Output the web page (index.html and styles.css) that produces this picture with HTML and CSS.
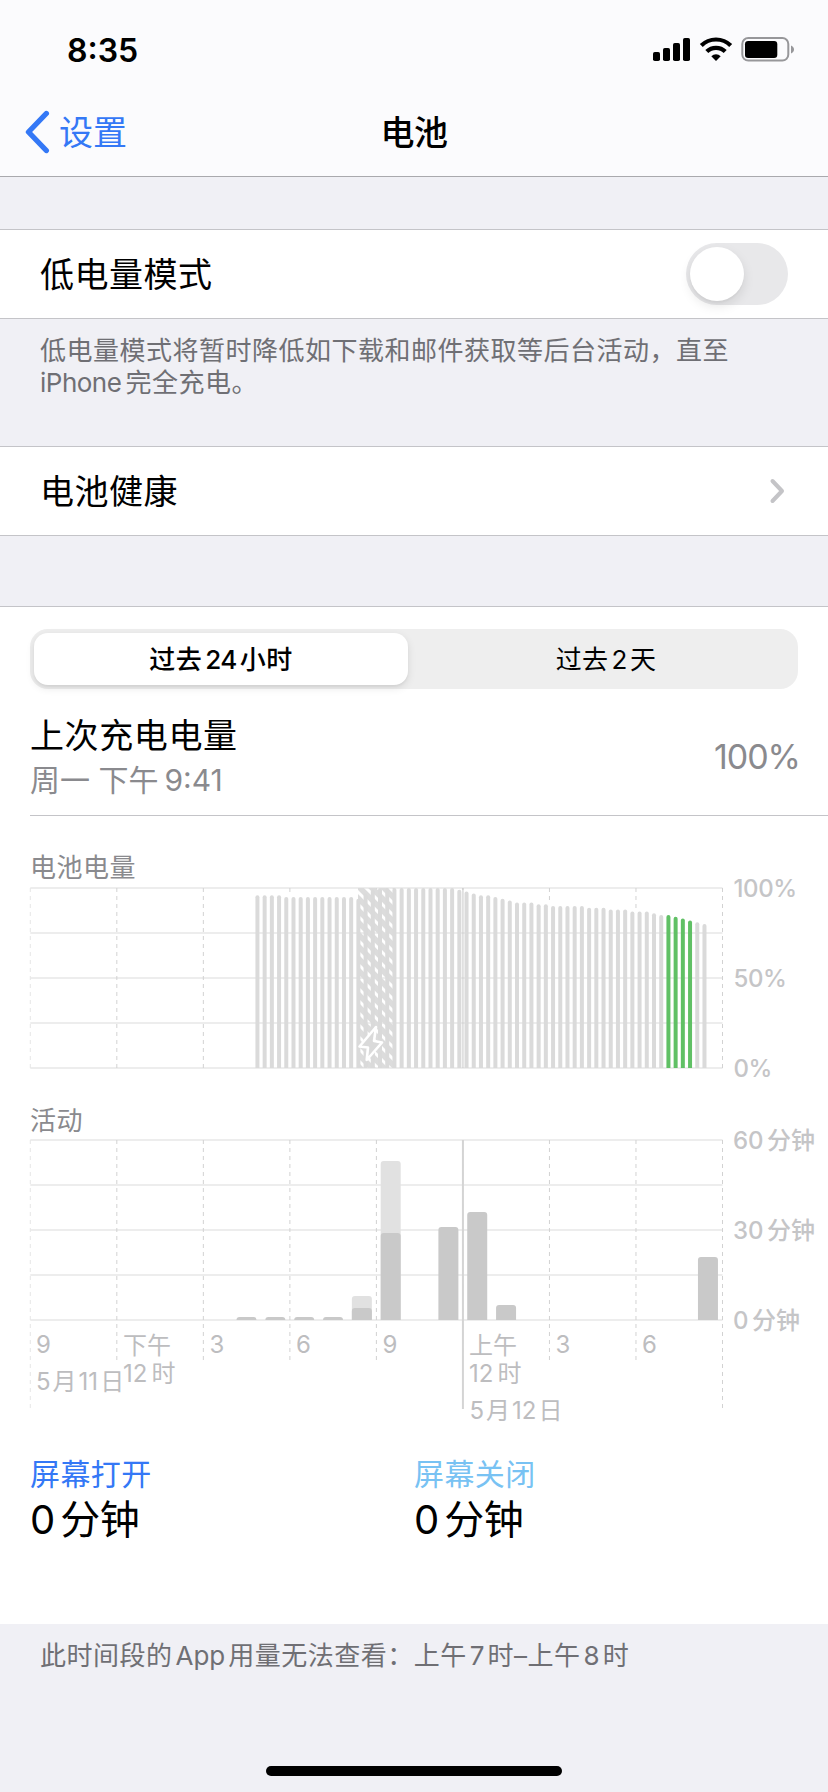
FILE: index.html
```
<!DOCTYPE html>
<html lang="zh-CN">
<head>
<meta charset="utf-8">
<title>电池</title>
<link rel="stylesheet" href="styles.css">
</head>
<body>
<main class="screen">
  <header class="top">
    <div class="status">
      <span class="time">8:35</span>
      <svg class="status-icons" width="144" height="30" viewBox="0 0 144 30">
        <rect x="1" y="16" width="7" height="9" rx="1.8"/>
        <rect x="11" y="12" width="7" height="13" rx="1.8"/>
        <rect x="21" y="7" width="7" height="18" rx="1.8"/>
        <rect x="31" y="2" width="7" height="23" rx="1.8"/>
        <g fill="none" stroke="#000" stroke-width="4.2">
          <path d="M49.3 9.6a20.8 20.8 0 0 1 29.4 0"/>
          <path d="M54.8 15.6a13 13 0 0 1 18.4 0"/>
        </g>
        <path d="M59.3 20.2a6.8 6.8 0 0 1 9.4 0L64 25z"/>
        <rect x="90.3" y="2" width="46" height="22.6" rx="6" fill="none" stroke="#97979a" stroke-width="2"/>
        <rect x="93" y="5" width="32.3" height="17" rx="3.2"/>
        <path d="M139 9.5c4 1.600 4 6.400 0 8z" fill="#97979a"/>
      </svg>
    </div>
    <nav class="nav">
      <a class="back">
        <svg width="26" height="44" viewBox="0 0 26 44"><path d="M22.300 3.500L4.500 22l17.800 18.500" fill="none" stroke="#3478f6" stroke-width="5.400" stroke-linecap="round" stroke-linejoin="round"/></svg>
        <span class="back-label">设置</span>
      </a>
      <h1 class="title">电池</h1>
    </nav>
  </header>

  <section class="row row-first">
    <span class="row-label">低电量模式</span>
    <span class="switch"><span class="knob"></span></span>
  </section>
  <p class="note note-mode">低电量模式将暂时降低如下载和邮件获取等后台活动，直至<br><span class="latin iphone">iPhone</span>完全充电。</p>

  <section class="row">
    <span class="row-label">电池健康</span>
    <svg class="chevron" width="18" height="28" viewBox="0 0 18 28"><path d="M4.500 4l9.500 10-9.500 10" fill="none" stroke="#c4c4c7" stroke-width="4" stroke-linecap="round" stroke-linejoin="round"/></svg>
  </section>

  <section class="card">
    <div class="segments">
      <span class="segment active">过去<span class="latin mid">24</span>小时</span>
      <span class="segment other">过去<span class="latin mid">2</span>天</span>
    </div>
    <div class="charge">
      <div>
        <div class="charge-title">上次充电电量</div>
        <div class="charge-time">周一 下午<span class="latin clock">9:41</span></div>
      </div>
      <span class="percent">100%</span>
    </div>

    <h2 class="chart-title level-title">电池电量</h2>
    <svg class="chart" width="828" height="219" viewBox="0 885 828 219">
      <defs>
        <pattern id="hatch" width="12" height="12" patternUnits="userSpaceOnUse">
          <path d="M-6 -6L18 18M-6 6L6 18M6 -6L18 6" stroke="#dcdcdc" stroke-width="5.500"/>
        </pattern>
      </defs>
      <g id="level-grid"></g>
      <rect x="358" y="888" width="36" height="180" fill="url(#hatch)"/>
      <g id="level-bars"></g>
      <path d="M376 1027L359.500 1046.500L368 1047.500L366.700 1060L382 1042.500L374 1041z" fill="#dadada" stroke="#fff" stroke-width="2.600" stroke-linejoin="round"/>
      <g class="axis percent-axis">
        <text x="733.500" y="897">100%</text>
        <text x="733.500" y="987">50%</text>
        <text x="733.500" y="1077">0%</text>
      </g>
    </svg>

    <h2 class="chart-title activity-title">活动</h2>
    <svg class="chart" width="828" height="303" viewBox="0 1137 828 303">
      <g id="activity-grid"></g>
      <g id="activity-bars"></g>
      <g class="axis">
        <text x="733" y="1149">60<tspan dx="3.500">分钟</tspan></text>
        <text x="733" y="1239">30<tspan dx="3.500">分钟</tspan></text>
        <text x="733" y="1329">0<tspan dx="3.500">分钟</tspan></text>
      </g>
      <g class="axis hours">
        <text x="36" y="1353">9</text>
        <text x="36" y="1389.500">5<tspan dx="2">月</tspan><tspan dx="2">11</tspan><tspan dx="2">日</tspan></text>
        <text x="123" y="1354">下午</text>
        <text x="123" y="1381.500">12<tspan dx="4">时</tspan></text>
        <text x="209.500" y="1353">3</text>
        <text x="296" y="1353">6</text>
        <text x="382.500" y="1353">9</text>
        <text x="469" y="1354">上午</text>
        <text x="469" y="1381.500">12<tspan dx="4">时</tspan></text>
        <text x="469.500" y="1418.500">5<tspan dx="2">月</tspan><tspan dx="2">12</tspan><tspan dx="2">日</tspan></text>
        <text x="555.500" y="1353">3</text>
        <text x="642" y="1353">6</text>
      </g>
    </svg>

    <div class="totals">
      <div>
        <div class="total-label on">屏幕打开</div>
        <div class="total-value"><span class="latin zero">0</span>分钟</div>
      </div>
      <div>
        <div class="total-label off">屏幕关闭</div>
        <div class="total-value"><span class="latin zero">0</span>分钟</div>
      </div>
    </div>
  </section>
  <p class="note note-usage">此时间段的<span class="latin small">App</span>用量无法查看：上午<span class="latin small">7</span>时–上午<span class="latin small">8</span>时</p>
  <div class="home"></div>
</main>
<script src="charts.js"></script>
</body>
</html>
```
FILE: styles.css
```
* { box-sizing: border-box; }
body {
  margin: 0;
  background: #f0f0f5;
  color: #000;
  font-family: Inter, "Noto Sans CJK SC", sans-serif;
}
.screen {
  width: 828px;
  height: 1792px;
  display: flex;
  flex-direction: column;
  overflow: hidden;
}
h1, h2, p { margin: 0; font-weight: 400; }
.latin { letter-spacing: 0; }

.top {
  height: 177px;
  background: #fbfbfd;
  border-bottom: 1px solid #a9a9ad;
}
.status {
  height: 88px;
  padding: 30px 32px 0 67px;
  display: flex;
  justify-content: space-between;
}
.time {
  padding-top: 1px;
  font-size: 32px;
  font-weight: 600;
  line-height: 40px;
}
.status-icons { margin-top: 6px; }
.nav {
  height: 88px;
  display: grid;
  grid-template-columns: 1fr auto 1fr;
  align-items: center;
  font-size: 34px;
  line-height: 40px;
}
.back {
  display: flex;
  align-items: center;
  gap: 9px;
  padding-left: 24px;
  color: #3478f6;
}
.back-label, .row-label { padding-top: 2px; }
.title { padding-top: 2px; font-size: 34px; font-weight: 500; letter-spacing: -0.5px; }

.row {
  height: 90px;
  padding: 0 40px;
  display: flex;
  justify-content: space-between;
  align-items: center;
  background: #fff;
  border-top: 1px solid #c4c4c8;
  border-bottom: 1px solid #c4c4c8;
  font-size: 34px;
  line-height: 40px;
  letter-spacing: 0.5px;
}
.row-first { margin-top: 52px; }
.switch {
  width: 102px;
  height: 62px;
  padding: 4px;
  border-radius: 31px;
  background: #e8e8ea;
}
.knob {
  display: block;
  width: 54px;
  height: 54px;
  border-radius: 50%;
  background: #fff;
  box-shadow: 0 5px 12px rgba(0, 0, 0, 0.1), 0 2px 2px rgba(0, 0, 0, 0.03);
}
.chevron { margin-right: 2px; }

.note {
  padding: 16px 40px 0;
  color: #6f6f74;
  font-size: 26px;
  line-height: 32px;
  letter-spacing: 0.5px;
}
.note-mode { height: 127px; }

.card {
  height: 1018px;
  margin-top: 70px;
  padding-top: 22px;
  background: #fff;
  border-top: 1px solid #c4c4c8;
}
.segments {
  height: 60px;
  margin: 0 30px;
  padding: 4px;
  display: grid;
  grid-template-columns: 374px 1fr;
  border-radius: 18px;
  background: #eee;
  font-size: 26px;
  letter-spacing: 0.4px;
  line-height: 53px;
  text-align: center;
}
.segment.active {
  height: 52px;
  border-radius: 14px;
  background: #fff;
  box-shadow: 0 3px 8px rgba(0, 0, 0, 0.1), 0 2px 2px rgba(0, 0, 0, 0.04);
  font-weight: 500;
}
.segment.other { padding-left: 10px; }
.mid { margin: 0 3px; letter-spacing: -0.5px; }

.charge {
  height: 127px;
  margin-left: 30px;
  padding: 27px 30px 0 0;
  display: flex;
  justify-content: space-between;
  border-bottom: 1px solid #c4c4c8;
}
.charge-title { font-size: 34px; line-height: 40px; letter-spacing: 0.6px; }
.charge-time { margin-top: 4px; color: #8a8a8e; font-size: 30px; line-height: 40px; }
.clock { margin-left: 6px; }
.percent { margin-right: -2px; color: #8a8a8e; font-size: 34px; line-height: 81px; letter-spacing: -1px; }

.chart-title {
  margin-left: 30px;
  color: #8a8a8e;
  font-size: 26px;
  letter-spacing: 0.5px;
}
.level-title { margin-top: 35px; line-height: 34px; }
.activity-title { line-height: 33px; }
.chart { display: block; overflow: visible; }
.axis { fill: #c5c5c7; font-size: 24px; font-weight: 500; }
.percent-axis { letter-spacing: -0.4px; }
.hours { fill: #bdbdbf; font-weight: 400; }

.totals {
  padding: 16px 30px 0;
  display: grid;
  grid-template-columns: 1fr 1fr;
}
.total-label { font-size: 30px; line-height: 36px; letter-spacing: 0.4px; }
.total-label.on { color: #3478f6; }
.total-label.off { color: #78c2f3; }
.total-value { margin-top: 3px; font-size: 40px; line-height: 50px; letter-spacing: -0.4px; }
.zero { margin-right: 5px; }
.small { margin: 0 3px; }
.iphone { margin-right: 4px; letter-spacing: -0.5px; }

.home {
  width: 296px;
  height: 10px;
  margin: auto auto 16px;
  border-radius: 5px;
  background: #000;
}
```
FILE: charts.js
```
const LEFT = 30.3, RIGHT = 722.5, STEP = (RIGHT - LEFT) / 8;

function add(parent, tag, attrs) {
  const el = document.createElementNS("http://www.w3.org/2000/svg", tag);
  for (const key in attrs) el.setAttribute(key, attrs[key]);
  document.getElementById(parent).appendChild(el);
}

// ends: bottom of each of the nine vertical lines
function grid(id, top, ends) {
  for (let i = 0; i < 5; i++) {
    add(id, "path", { d: `M${LEFT} ${top + i * 45}H${RIGHT}`, stroke: "#ededed", "stroke-width": 2 });
  }
  ends.forEach((end, i) => {
    const x = LEFT + i * STEP;
    add(id, "path", { d: `M${x} ${top}V${end}`, stroke: i ? "#d2d2d2" : "#e6e6e6", "stroke-width": 1, "stroke-dasharray": "4 4" });
  });
}

// Battery level: one bar for each quarter of an hour, [percent, count]
const levels = [[96, 4], [95, 10], [94, 1], [97, 1], [99, 1], [100, 11], [99, 1], [98, 1], [97, 1],
  [96, 2], [95, 1], [94, 1], [93, 1], [92, 3], [91, 2], [90, 5], [89, 3], [88, 3], [87, 3], [86, 1],
  [85, 2], [84, 1], [83, 1], [82, 1], [81, 1], [80, 1]];
grid("level-grid", 888, [1068, 1068, 1068, 896, 890, 890, 904, 910, 1068]);
let slot = 31;
for (const [percent, count] of levels) {
  for (let i = 0; i < count; i++, slot++) {
    const x = LEFT + (slot + 0.5) * STEP / 12;
    const y = 1068 - percent * 1.8;
    const green = slot >= 88 && slot <= 91;
    add("level-bars", "path", {
      d: `M${x - 2} 1068V${y + 2}a2 2 0 0 1 4 0V1068z`,
      fill: green ? "#60c065" : "#dadada"
    });
  }
}
add("level-bars", "path", { d: `M${LEFT + 5 * STEP} 888V1068`, stroke: "#c6c6c6", "stroke-width": 1.6, opacity: 0.6 });

// Activity: [hour slot, top of bar, top of the darker part]
grid("activity-grid", 1140, [1408, 1363, 1363, 1363, 1363, 1363, 1363, 1363, 1408]);
add("activity-grid", "path", { d: `M${LEFT + 5 * STEP} 1140V1409`, stroke: "#d4d4d4", "stroke-width": 2 });
const activity = [[7, 1317, 1317], [8, 1317, 1317], [9, 1317, 1317], [10, 1317, 1317], [11, 1296, 1308],
  [12, 1161, 1233], [14, 1227, 1227], [15, 1212, 1212], [16, 1305, 1305], [23, 1257, 1257]];
for (const [hour, top, dark] of activity) {
  const x = LEFT + hour * STEP / 3 + 4.3;
  const bar = y => `M${x} 1320V${y + 3}q0-3 3-3h14q3 0 3 3V1320z`;
  if (top < dark) add("activity-bars", "path", { d: bar(top), fill: "#e1e1e1" });
  add("activity-bars", "path", { d: bar(dark), fill: "#c9c9c9" });
}
```
